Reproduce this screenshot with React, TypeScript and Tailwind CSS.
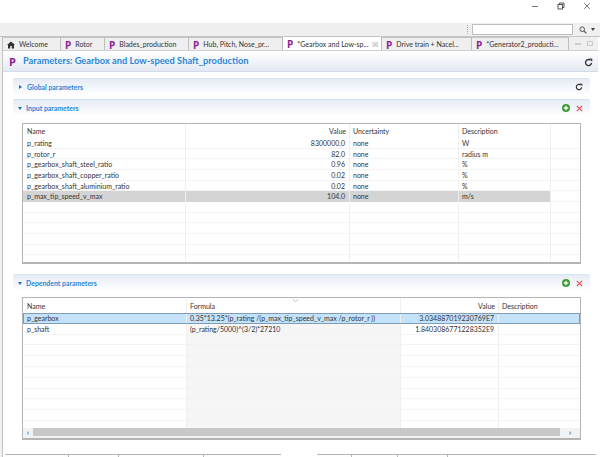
import React from "react";

const font = { fontFamily: '"Lato","Open Sans",sans-serif' };

function P({ className = "" }: { className?: string }) {
  return <span className={`font-bold text-[#8e1d96] text-[10px] leading-none ${className}`} style={{ fontFamily: '"Open Sans",sans-serif' }}>P</span>;
}

function Refresh({ size = 9 }: { size?: number }) {
  return (
    <svg width={size} height={size} viewBox="0 0 12 12" fill="none" className="shrink-0">
      <path d="M10 6.5A4 4 0 1 1 8.6 3" stroke="#333" strokeWidth="1.8" />
      <path d="M7 0.8 11 1v4z" fill="#333" />
    </svg>
  );
}

function AddDel() {
  return (
    <div className="flex items-center gap-[6px] ml-auto">
      <svg width="8" height="8" viewBox="0 0 10 10">
        <circle cx="5" cy="5" r="5" fill="#3d9b35" />
        <path d="M5 2.2v5.6M2.2 5h5.6" stroke="#fff" strokeWidth="1.6" />
      </svg>
      <svg width="7" height="7" viewBox="0 0 8 8">
        <path d="M1 1l6 6M7 1L1 7" stroke="#e4484d" strokeWidth="1.2" />
      </svg>
    </div>
  );
}

function Section({ title, open, right }: { title: string; open: boolean; right: React.ReactNode }) {
  return (
    <div className="h-[17px] flex items-center pl-[5px] pr-[7px] border-t border-[#d9e3ef] bg-gradient-to-b from-[#e6ecf5] to-[#ffffff] rounded-t-[2px]">
      {open ? (
        <span className="w-0 h-0 border-l-[2.5px] border-r-[2.5px] border-t-[3px] border-l-transparent border-r-transparent border-t-[#1c6fc4] mr-[3px]" />
      ) : (
        <span className="w-0 h-0 border-t-[2.5px] border-b-[2.5px] border-l-[3px] border-t-transparent border-b-transparent border-l-[#1c6fc4] mr-[4px] ml-[1px]" />
      )}
      <span className="text-[6.9px] font-bold text-[#2a86d8] ml-[1px]">{title}</span>
      <div className="ml-auto flex items-center">{right}</div>
    </div>
  );
}

const Tab = ({ label, w, active, icon, close }: { label: string; w: string; active?: boolean; icon?: React.ReactNode; close?: boolean }) => (
  <div className={`${w} shrink-0 h-[14px] flex items-center pl-[4px] gap-[4px] border-r border-[#bdbdbd] ${active ? "bg-white" : "bg-[#efefef] border-t border-t-[#c4c4c4]"}`}>
    {icon ?? <P className="text-[9px]" />}
    <span className="text-[7px] text-[#333] whitespace-nowrap">{label}</span>
    {close && <span className="ml-auto mr-[3px] text-[7px] text-[#999] leading-none">☒</span>}
  </div>
);

const inputRows = [
  ["p_rating", "8300000.0", "none", "W"],
  ["p_rotor_r", "82.0", "none", "radius m"],
  ["p_gearbox_shaft_steel_ratio", "0.96", "none", "%"],
  ["p_gearbox_shaft_copper_ratio", "0.02", "none", "%"],
  ["p_gearbox_shaft_aluminium_ratio", "0.02", "none", "%"],
  ["p_max_tip_speed_v_max", "104.0", "none", "m/s"],
  ["", "", "", ""],
  ["", "", "", ""],
  ["", "", "", ""],
  ["", "", "", ""],
  ["", "", "", ""],
  ["", "", "", ""],
];

const depRows = [
  ["p_gearbox", "0.35*13.25*(p_rating /(p_max_tip_speed_v_max /p_rotor_r ))", "3.034887019230769E7", ""],
  ["p_shaft", "(p_rating/5000)^(3/2)*27210", "1.8403086771228352E9", ""],
  ...Array.from({ length: 10 }, () => ["", "", "", ""]),
];

function InputTable() {
  return (
    <div className="mx-[9px] mt-[7px] h-[141px] border border-[#b4b4b4] border-b-2 overflow-hidden text-[7px] text-[#333] bg-white">
      <div className="grid grid-cols-[163px_164px_109px_92px_1fr] h-[14px] items-center">
        <div className="pl-[4px] border-r border-[#efefef] h-full flex items-center">Name</div>
        <div className="pr-[3px] text-right border-r border-[#efefef] h-full flex items-center justify-end">Value</div>
        <div className="pl-[3px] border-r border-[#efefef] h-full flex items-center">Uncertainty</div>
        <div className="pl-[3px] border-r border-[#efefef] h-full flex items-center">Description</div>
        <div />
      </div>
      {inputRows.map((r, i) => (
        <div key={i} className="grid grid-cols-[163px_164px_109px_92px_1fr] h-[10.67px] items-center border-b border-[#f3f3f3]">
          <div className={`pl-[4px] h-full flex items-center border-r border-[#efefef] ${i === 5 ? "bg-[#d4d4d4]" : ""}`}>{r[0]}</div>
          <div className={`pr-[4px] h-full flex items-center justify-end border-r border-[#efefef] ${i === 5 ? "bg-[#d4d4d4]" : ""}`}>{r[1]}</div>
          <div className={`pl-[3px] h-full flex items-center border-r border-[#efefef] ${i === 5 ? "bg-[#d4d4d4]" : ""}`}>{r[2]}</div>
          <div className={`pl-[3px] h-full flex items-center border-r border-[#efefef] ${i === 5 ? "bg-[#d4d4d4]" : ""}`}>{r[3]}</div>
          <div />
        </div>
      ))}
    </div>
  );
}

function DepTable() {
  return (
    <div className="relative mx-[9px] mt-[6px] h-[143px] border border-[#b4b4b4] border-b-2 overflow-hidden text-[7px] text-[#333] bg-white flex flex-col">
      <div className="grid grid-cols-[164px_214px_98px_1fr] h-[15px] items-center shrink-0">
        <div className="pl-[4px] pt-[2px] border-r border-[#efefef] h-full flex items-center">Name</div>
        <div className="pl-[3px] pt-[2px] border-r border-[#efefef] h-full flex items-center">Formula</div>
        <div className="pr-[3px] pt-[2px] border-r border-[#efefef] h-full flex items-center justify-end">Value</div>
        <div className="pl-[3px] pt-[2px] h-full flex items-center">Description</div>
      </div>
      <svg width="5" height="3" viewBox="0 0 5 3" className="absolute left-[270px] top-[1px]">
        <path d="M0 0l2.5 3L5 0" stroke="#bbb" strokeWidth="0.8" fill="none" />
      </svg>
      <div className="flex-1 overflow-hidden">
        {depRows.map((r, i) => (
          <div
            key={i}
            className={`grid grid-cols-[164px_214px_98px_1fr] h-[10.8px] items-center ${i === 0 ? "bg-[#c5e2fb] outline outline-1 -outline-offset-1 outline-[#7f9db9]" : "border-b border-[#f3f3f3]"}`}
          >
            <div className="pl-[4px] h-full flex items-center border-r border-[#efefef]">{r[0]}</div>
            <div className={`pl-[3px] h-full flex items-center border-r border-[#efefef] whitespace-nowrap ${i === 0 ? "" : "bg-[#f6f6f6]"}`}>{r[1]}</div>
            <div className="pr-[4px] h-full flex items-center justify-end border-r border-[#efefef]">{r[2]}</div>
            <div />
          </div>
        ))}
      </div>
      <div className="h-[10px] shrink-0 bg-[#f2f2f2] flex items-stretch pb-[2px]">
        <div className="w-[10px] flex items-center justify-center text-[7px] leading-none font-bold text-[#444]">‹</div>
        <div className="flex-1 bg-[#c8c8c8]" />
        <div className="w-[20px] flex items-center justify-center text-[7px] leading-none font-bold text-[#444]">›</div>
      </div>
    </div>
  );
}

export default function App() {
  return (
    <div className="w-[600px] h-[457px] bg-white overflow-hidden flex flex-col" style={font}>
      {/* title bar */}
      <div className="h-[23px] shrink-0 bg-white flex items-start justify-end pt-[2px] pr-[9px] gap-[18px]">
        <svg width="8" height="8" viewBox="0 0 8 8"><path d="M1 4.5h6" stroke="#555" strokeWidth="0.8" /></svg>
        <svg width="8" height="8" viewBox="0 0 8 8" fill="none"><rect x="1" y="2.5" width="4.5" height="4.5" stroke="#444" strokeWidth="0.9" /><path d="M2.5 2.5V1H7v4.5H5.5" stroke="#444" strokeWidth="0.9" /></svg>
        <svg width="8" height="8" viewBox="0 0 8 8"><path d="M1.2 1.2l5.6 5.6M6.8 1.2L1.2 6.8" stroke="#555" strokeWidth="0.8" /></svg>
      </div>
      {/* toolbar */}
      <div className="h-[13px] shrink-0 bg-[#f0f0f0] flex items-center justify-end">
        <div className="w-[1px] h-[9px] border-l border-dotted border-[#aaa] mr-[4px]" />
        <div className="w-[101px] h-[11px] bg-white border border-[#bdbdbd]" />
        <div className="w-[27px] flex items-center pl-[6px] gap-[4px]">
          <svg width="8" height="8" viewBox="0 0 8 8" fill="none"><circle cx="3.2" cy="3.2" r="2.3" stroke="#555" strokeWidth="1" /><path d="M5 5l2.4 2.4" stroke="#555" strokeWidth="1.2" /></svg>
          <span className="w-0 h-0 border-l-[2.5px] border-r-[2.5px] border-t-[3px] border-l-transparent border-r-transparent border-t-[#444]" />
        </div>
      </div>
      {/* main */}
      <div className="flex-1 flex min-h-0 bg-[#f0f0f0] border-t border-[#c4c4c4]">
        <div className="w-[3px] shrink-0 bg-[#f0f0f0] border-r border-[#c4c4c4]" />
        <div className="flex-1 min-w-0 flex flex-col">
          {/* tabs */}
          <div className="flex h-[13px] shrink-0 items-start bg-[#efefef]">
            <Tab
              w="w-[58px]"
              label="Welcome"
              icon={<svg width="8" height="8" viewBox="0 0 8 8"><path d="M4 .5L0 4h1v3.5h2.2V5h1.6v2.5H7V4h1z" fill="#333" /></svg>}
            />
            <Tab w="w-[44px]" label="Rotor" />
            <Tab w="w-[84px]" label="Blades_production" />
            <Tab w="w-[94px]" label="Hub, Pitch, Nose_pr..." />
            <Tab w="w-[99px]" label="*Gearbox and Low-sp..." active close />
            <Tab w="w-[90px]" label="Drive train + Nacel..." />
            <Tab w="w-[97px]" label="*Generator2_producti..." />
            <div className="flex-1 flex items-center gap-[6px] pl-[6px] h-[13px]">
              <span className="w-[6px] h-[2px] bg-[#ccc]" />
              <span className="w-[6px] h-[5px] border border-[#ccc]" />
            </div>
          </div>
          {/* editor */}
          <div className="flex-1 min-h-0 bg-white flex flex-col border-t border-[#d0d0d0]">
            <div className="h-[21px] shrink-0 bg-gradient-to-b from-[#ffffff] to-[#e4eaf3] border-b border-[#d3dce8] flex items-center pl-[6px] pr-[5px]">
              <P className="text-[11px] mr-[7px]" />
              <span className="text-[9.3px] font-bold text-[#2a86d8] whitespace-nowrap">Parameters: Gearbox and Low-speed Shaft_production</span>
              <span className="ml-auto pt-[2px]"><Refresh /></span>
            </div>
            <div className="pl-[10px] pr-[8px] pt-[6px] flex flex-col">
              <Section title="Global parameters" open={false} right={<Refresh size={8} />} />
              <div className="h-[4px]" />
              <Section title="Input parameters" open right={<AddDel />} />
              <InputTable />
              <div className="h-[10px]" />
              <Section title="Dependent parameters" open right={<AddDel />} />
              <DepTable />
            </div>
            <div className="mt-auto flex h-[3px] ml-[2px] mr-[2px]">
              <div className="w-[64px] border-t border-r border-[#b4b4b4]" />
              <div className="w-[50px] border-t border-r border-[#b4b4b4]" />
              <div className="w-[85px] border-t border-r border-[#b4b4b4]" />
              <div className="w-[77px] border-t border-[#b4b4b4]" />
              <div className="w-[36px]" />
              <div className="w-[35px] border-t border-r border-[#b4b4b4]" />
              <div className="w-[46px] border-t border-r border-[#b4b4b4]" />
              <div className="w-[50px] border-t border-r border-[#b4b4b4]" />
              <div className="flex-1 border-t border-[#b4b4b4]" />
            </div>
          </div>
        </div>
        <div className="w-[2px] shrink-0 bg-white" />
      </div>
    </div>
  );
}
